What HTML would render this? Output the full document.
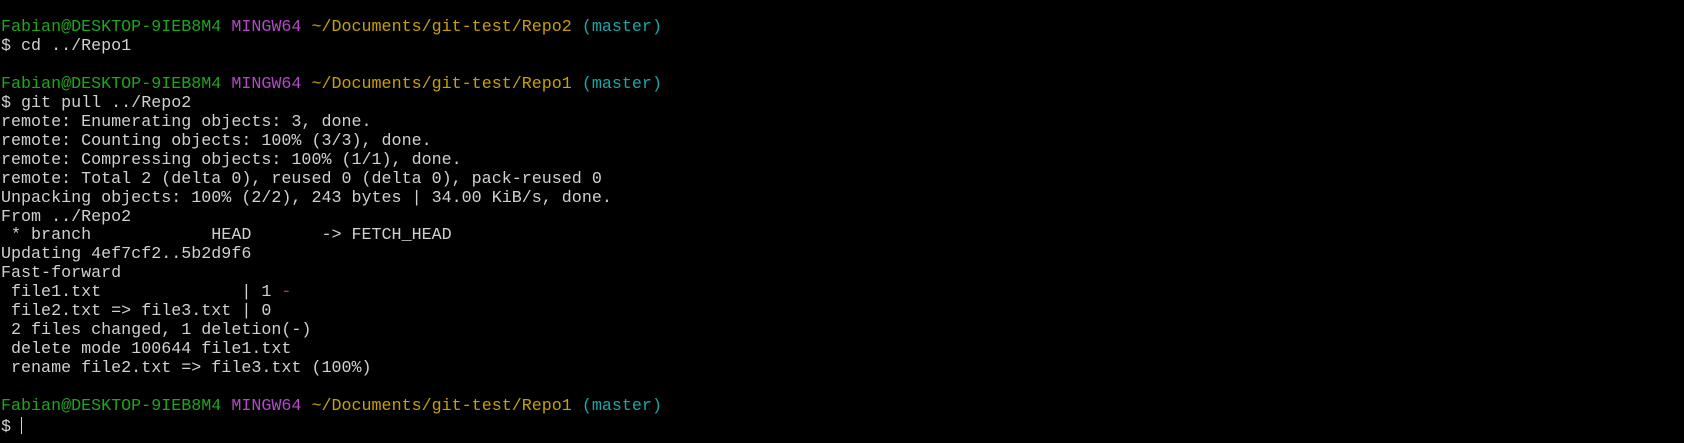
<!DOCTYPE html>
<html><head><meta charset="utf-8"><style>
html,body{margin:0;padding:0;background:#000;width:1684px;height:443px;overflow:hidden}
pre{margin:0;padding:19px 0 0 1px;font-family:"Liberation Mono",monospace;font-size:16.7px;line-height:18.95px;color:#d0d0d0;white-space:pre}
.g{color:#1ea51e}.m{color:#b448c8}.y{color:#c8a000}.c{color:#17a8a8}.r{color:#d03030}
.cur{display:inline-block;width:1px;height:17px;background:#d0d0d0;vertical-align:-3px}
</style></head><body><pre><span class="g">Fabian@DESKTOP-9IEB8M4</span> <span class="m">MINGW64</span> <span class="y">~/Documents/git-test/Repo2</span> <span class="c">(master)</span>
$ cd ../Repo1

<span class="g">Fabian@DESKTOP-9IEB8M4</span> <span class="m">MINGW64</span> <span class="y">~/Documents/git-test/Repo1</span> <span class="c">(master)</span>
$ git pull ../Repo2
remote: Enumerating objects: 3, done.
remote: Counting objects: 100% (3/3), done.
remote: Compressing objects: 100% (1/1), done.
remote: Total 2 (delta 0), reused 0 (delta 0), pack-reused 0
Unpacking objects: 100% (2/2), 243 bytes | 34.00 KiB/s, done.
From ../Repo2
 * branch            HEAD       -&gt; FETCH_HEAD
Updating 4ef7cf2..5b2d9f6
Fast-forward
 file1.txt              | 1 <span class="r">-</span>
 file2.txt =&gt; file3.txt | 0
 2 files changed, 1 deletion(-)
 delete mode 100644 file1.txt
 rename file2.txt =&gt; file3.txt (100%)

<span class="g">Fabian@DESKTOP-9IEB8M4</span> <span class="m">MINGW64</span> <span class="y">~/Documents/git-test/Repo1</span> <span class="c">(master)</span>
$ <span class="cur"></span></pre></body></html>
